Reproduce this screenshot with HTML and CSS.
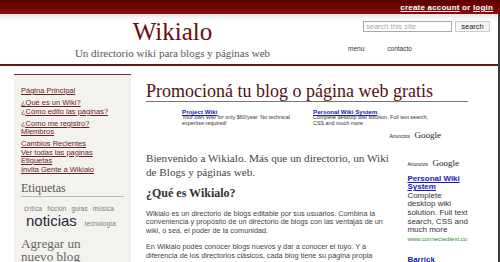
FILE: index.html
```html
<!DOCTYPE html>
<html lang="es">
<head>
<meta charset="utf-8">
<title>Wikialo</title>
<link rel="stylesheet" href="styles.css">
</head>
<body>
<div class="topbar">
  <div class="account"><a href="#">create account</a> or <a href="#">login</a></div>
</div>
<div class="page">
  <div class="header">
    <div class="brand">
      <div class="title">Wikialo</div>
      <div class="subtitle">Un directorio wiki para blogs y páginas web</div>
    </div>
    <div class="tools">
      <form class="search">
        <input class="search-input" type="text" placeholder="search this site">
        <button class="search-btn" type="button">search</button>
      </form>
      <div class="menu">
        <a href="#">menu</a>
        <a href="#">contacto</a>
      </div>
    </div>
  </div>
  <div class="content">
    <div class="sidebar">
      <ul class="nav">
        <li><a href="#">Página Principal</a></li>
      </ul>
      <ul class="nav">
        <li><a href="#">¿Qué es un Wiki?</a></li>
        <li><a href="#">¿Cómo edito las páginas?</a></li>
      </ul>
      <ul class="nav">
        <li><a href="#">¿Como me registro?</a></li>
        <li><a href="#">Miembros</a></li>
      </ul>
      <ul class="nav">
        <li><a href="#">Cambios Recientes</a></li>
        <li><a href="#">Ver todas las paginas</a></li>
        <li><a href="#">Etiquetas</a></li>
        <li><a href="#">Invita Gente a Wikialo</a></li>
      </ul>
      <h3 class="side-title">Etiquetas</h3>
      <div class="tags">
        <span class="tag-small">crítica</span>
        <span class="tag-small">ficción</span>
        <span class="tag-small">guías</span>
        <span class="tag-small">música</span>
        <span class="tag-big">noticias</span>
        <span class="tag-small">tecnología</span>
      </div>
      <h3 class="side-add">Agregar un nuevo blog</h3>
    </div>
    <div class="main">
      <h1 class="promo">Promocioná tu blog o página web gratis</h1>
      <div class="banner">
        <div class="banner-ads">
          <div class="bad">
            <a href="#">Project Wiki</a>
            <p>Your own Wiki for only $60/year. No technical expertise required!</p>
          </div>
          <div class="bad">
            <a href="#">Personal Wiki System</a>
            <p>Complete desktop wiki solution. Full text search, CSS and much more</p>
          </div>
        </div>
        <div class="adsense"><span class="ads-a">Anuncios</span> <span class="ads-g">Google</span></div>
      </div>
      <div class="columns">
        <div class="text">
          <p class="intro">Bienvenido a Wikialo. Más que un directorio, un Wiki de Blogs y páginas web.</p>
          <h2 class="q">¿Qué es Wikialo?</h2>
          <p class="body">Wikialo es un directorio de blogs editable por sus usuarios. Combina la conveniencia y propósito de un directorio de blogs con las ventajas de un wiki, o sea, el poder de la comunidad.</p>
          <p class="body">En Wikialo podés conocer blogs nuevos y dar a conocer el tuyo. Y a diferencia de los directorios clásicos, cada blog tiene su página propia dónde puede tener una descripción detallada sobre el blog y el autor.</p>
        </div>
        <div class="sky">
          <div class="adsense sky-head"><span class="ads-a">Anuncios</span> <span class="ads-g">Google</span></div>
          <a class="sky-link" href="#">Personal Wiki System</a>
          <p class="sky-desc">Complete desktop wiki solution. Full text search, CSS and much more</p>
          <div class="sky-url">www.connectedtext.co</div>
          <a class="sky-link sky-next" href="#">Barrick</a>
        </div>
      </div>
    </div>
  </div>
</div>
</body>
</html>
```
FILE: styles.css
```css
* { box-sizing: border-box; }
html, body { margin: 0; padding: 0; }
body {
  width: 500px;
  height: 262px;
  overflow: hidden;
  background: #fff;
  font-family: "Liberation Sans", Arial, sans-serif;
}
a { color: inherit; }
ul { list-style: none; margin: 0; padding: 0; }
p, h1, h2, h3 { margin: 0; }

.topbar {
  height: 14px;
  background: linear-gradient(#5a0000, #8a0b0b);
  display: flex;
  justify-content: flex-end;
  align-items: center;
  padding-right: 7px;
}
.account {
  color: #fff;
  font-size: 8px;
  font-weight: bold;
  letter-spacing: 0.2px;
}
.account a { color: #fff; }

.page {
  width: 500px;
  border-right: 2px solid #3a3a3a;
  background: linear-gradient(#e4e4e4 0, #fafafa 5px, #fff 8px);
  height: 248px;
}

.header {
  height: 52px;
  display: flex;
  border-bottom: 2px solid #5c1c1c;
}
.brand {
  width: 345px;
  text-align: center;
  padding-top: 4px;
}
.title {
  font-family: "Liberation Serif", "Times New Roman", serif;
  font-size: 25px;
  line-height: 28px;
  color: #6a0c0c;
}
.subtitle {
  font-family: "Liberation Serif", "Times New Roman", serif;
  font-size: 11px;
  line-height: 14px;
  color: #555;
}
.tools {
  flex: 1;
  display: flex;
  flex-direction: column;
  padding-top: 7px;
}
.search {
  display: flex;
  gap: 3px;
  margin: 0 0 0 18px;
}
.search-input {
  width: 89px;
  height: 11px;
  border: 1px solid #aaa;
  padding: 0 2px;
  font-family: "Liberation Sans", Arial, sans-serif;
  font-size: 7.5px;
  color: #999;
}
.search-input::placeholder { color: #aaa; }
.search-btn {
  width: 35px;
  height: 11px;
  border: 1px solid #ccc;
  background: #f6f6f6;
  padding: 0;
  font-family: "Liberation Sans", Arial, sans-serif;
  font-size: 7.5px;
  color: #222;
  line-height: 9px;
}
.menu {
  display: flex;
  gap: 23px;
  margin: 13px 0 0 3px;
  font-size: 6.5px;
}
.menu a { color: #333; text-decoration: none; }

.content {
  display: flex;
  padding-top: 8px;
}
.sidebar {
  width: 117px;
  margin-left: 14px;
  height: 200px;
  background: #f3f2ee;
  border-top: 1px solid #6b3030;
  padding: 12px 0 0 7px;
}
.nav {
  margin-bottom: 3.5px;
}
.nav li {
  font-size: 7.5px;
  line-height: 8.5px;
}
.nav a { color: #6e1f1f; }
.side-title {
  font-family: "Liberation Serif", "Times New Roman", serif;
  font-weight: normal;
  font-size: 12px;
  line-height: 14px;
  color: #555;
  margin-top: 7px;
  width: 103px;
  border-bottom: 1px solid #bbb;
  padding-bottom: 1px;
}
.tags {
  display: flex;
  flex-wrap: wrap;
  align-items: baseline;
  column-gap: 5px;
  padding: 8px 0 0 3px;
  width: 100px;
  line-height: 8px;
}
.tag-small { font-size: 6.3px; color: #777; letter-spacing: 0.2px; }
.tag-big {
  font-size: 15px;
  line-height: 16px;
  color: #252840;
  margin-left: 2px;
  margin-right: 3px;
}
.side-add {
  font-family: "Liberation Serif", "Times New Roman", serif;
  font-weight: normal;
  font-size: 13.2px;
  line-height: 13px;
  color: #666;
  margin-top: 8px;
  width: 92px;
}

.main {
  width: 322px;
  margin-left: 15px;
  padding-top: 7px;
}
.promo {
  font-family: "Liberation Serif", "Times New Roman", serif;
  font-weight: normal;
  font-size: 18px;
  line-height: 20px;
  color: #561010;
  border-bottom: 1px solid #777;
}
.banner {
  width: 259px;
  margin: 6px 0 0 36px;
}
.banner-ads {
  display: flex;
  gap: 7px;
}
.bad { width: 124px; }
.bad a {
  display: block;
  font-size: 6.2px;
  font-weight: bold;
  color: #1a1ab5;
  line-height: 7px;
}
.bad p {
  font-size: 5.4px;
  line-height: 5.8px;
  color: #333;
}
.adsense {
  text-align: right;
  margin-top: 1px;
  color: #222;
  line-height: 9px;
}
.ads-a { font-size: 5px; }
.ads-g { font-family: "Liberation Serif", serif; font-size: 9px; }

.columns {
  display: flex;
  margin-top: 10px;
}
.text { width: 250px; }
.intro {
  font-family: "Liberation Serif", "Times New Roman", serif;
  font-size: 11.2px;
  line-height: 14px;
  color: #444;
}
.q {
  font-family: "Liberation Serif", "Times New Roman", serif;
  font-size: 12px;
  line-height: 14px;
  color: #333;
  margin-top: 7px;
}
.body {
  font-size: 7.3px;
  line-height: 8.6px;
  color: #444;
  margin-top: 10px;
}
.body + .body { margin-top: 8px; }
.sky {
  width: 62px;
  margin-left: 17px;
  padding-top: 5px;
}
.sky-head { text-align: left; margin: 0 0 6px 0; }
.sky-link {
  display: block;
  font-size: 8px;
  font-weight: bold;
  line-height: 8.5px;
  color: #1a1ab5;
}
.sky-desc {
  font-size: 8px;
  line-height: 8.7px;
  color: #333;
}
.sky-url {
  font-size: 6px;
  line-height: 8px;
  color: #2a8a2a;
  white-space: nowrap;
}
.sky-next { margin-top: 13px; }
```
